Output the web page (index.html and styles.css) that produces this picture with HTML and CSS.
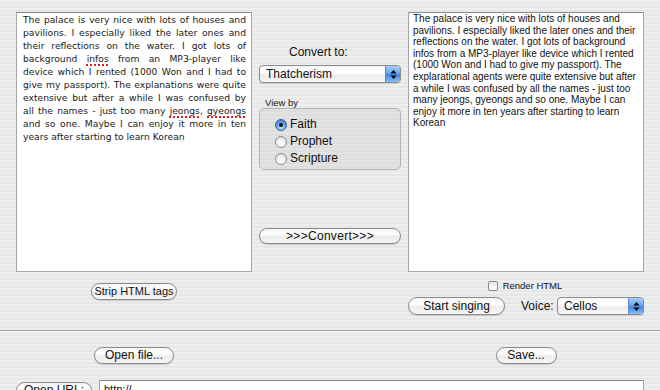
FILE: index.html
```html
<!DOCTYPE html>
<html>
<head>
<meta charset="utf-8">
<link rel="stylesheet" href="styles.css">
</head>
<body>
<div class="top">
  <div class="col col-left">
    <div class="textbox tb-left">
      <span class="jl">The palace is very nice with lots of houses and</span>
      <span class="jl">pavilions. I especially liked the later ones and</span>
      <span class="jl">their reflections on the water. I got lots of</span>
      <span class="jl">background <span class="sp">infos</span> from an MP3-player like</span>
      <span class="jl">device which I rented (1000 Won and I had to</span>
      <span class="jl">give my passport). The explanations were quite</span>
      <span class="jl">extensive but after a while I was confused by</span>
      <span class="jl">all the names - just too many <span class="sp">jeongs</span>, <span class="sp">gyeongs</span></span>
      <span class="jl">and so one. Maybe I can enjoy it more in ten</span>
      <span class="ll">years after starting to learn Korean</span>
    </div>
    <div class="btn btn-strip">Strip HTML tags</div>
  </div>
  <div class="col col-mid">
    <div class="conv-label">Convert to:</div>
    <div class="popup popup-conv">
      <span class="popup-text">Thatcherism</span>
      <span class="stepper"><svg width="7" height="11" viewBox="0 0 7 11"><path d="M3.5 1 L6.5 4.5 L0.5 4.5 Z M3.5 10 L6.5 6.5 L0.5 6.5 Z" fill="#000"/></svg></span>
    </div>
    <div class="group-label">View by</div>
    <div class="group">
      <div class="radio-row"><span class="radio on"></span><span class="rlabel">Faith</span></div>
      <div class="radio-row"><span class="radio"></span><span class="rlabel">Prophet</span></div>
      <div class="radio-row"><span class="radio"></span><span class="rlabel">Scripture</span></div>
    </div>
    <div class="spacer"></div>
    <div class="btn btn-convert">&gt;&gt;&gt;Convert&gt;&gt;&gt;</div>
  </div>
  <div class="col col-right">
    <div class="textbox tb-right">
      <span class="rl">The palace is very nice with lots of houses and</span>
      <span class="rl">pavilions. I especially liked the later ones and their</span>
      <span class="rl">reflections on the water. I got lots of background</span>
      <span class="rl">infos from a MP3-player like device which I rented</span>
      <span class="rl">(1000 Won and I had to give my passport). The</span>
      <span class="rl">explarational agents were quite extensive but after</span>
      <span class="rl">a while I was confused by all the names - just too</span>
      <span class="rl">many jeongs, gyeongs and so one. Maybe I can</span>
      <span class="rl">enjoy it more in ten years after starting to learn</span>
      <span class="rl">Korean</span>
    </div>
    <div class="check-row"><span class="checkbox"></span><span class="clabel">Render HTML</span></div>
    <div class="sing-row">
      <div class="btn btn-sing">Start singing</div>
      <span class="voice-label">Voice:</span>
      <div class="popup popup-voice">
        <span class="popup-text">Cellos</span>
        <span class="stepper"><svg width="7" height="11" viewBox="0 0 7 11"><path d="M3.5 1 L6.5 4.5 L0.5 4.5 Z M3.5 10 L6.5 6.5 L0.5 6.5 Z" fill="#000"/></svg></span>
      </div>
    </div>
  </div>
</div>
<div class="sep"></div>
<div class="files">
  <div class="fcol"><div class="btn btn-open">Open file...</div></div>
  <div class="fgap"></div>
  <div class="fcol"><div class="btn btn-save">Save...</div></div>
</div>
<div class="url-row">
  <div class="btn btn-url">Open URL:</div>
  <div class="url-field">http://</div>
</div>
</body>
</html>
```

FILE: styles.css
```css
html, body {
  margin: 0;
  padding: 0;
}
body {
  width: 660px;
  height: 390px;
  overflow: hidden;
  font-family: "Liberation Sans", Arial, sans-serif;
  color: #111;
  background: repeating-linear-gradient(to bottom, #eeeeee 0px, #eeeeee 2px, #e7e7e7 2px, #e7e7e7 4px);
}
.top {
  display: flex;
  height: 330px;
  box-sizing: border-box;
  padding: 12px 0 0 16px;
}
.col {
  display: flex;
  flex-direction: column;
}
.col-left {
  width: 236px;
  align-items: center;
}
.col-mid {
  width: 156px;
  box-sizing: border-box;
  padding: 0 7px;
}
.col-right {
  width: 236px;
  align-items: stretch;
}
.textbox {
  box-sizing: border-box;
  width: 236px;
  height: 260px;
  background: #fff;
  border: 1px solid #a5a5a5;
  border-top-color: #8a8a8a;
}
.tb-left {
  padding: 0 5px 0 6px;
  font-family: "DejaVu Sans", sans-serif;
  font-size: 9.2px;
  line-height: 13px;
  color: #1a1a1a;
}
.jl {
  display: block;
  text-align: justify;
  text-align-last: justify;
}
.ll {
  display: block;
}
.sp {
  text-decoration: underline dotted #e02020;
  text-decoration-thickness: 1.5px;
  text-underline-offset: 2px;
}
.tb-right {
  padding: 0 4px 0 4px;
  font-size: 10px;
  line-height: 11.6px;
  color: #111;
}
.rl {
  display: block;
  white-space: nowrap;
}
.btn {
  box-sizing: border-box;
  height: 17px;
  border: 1px solid #8a8a8a;
  border-radius: 9px;
  background: linear-gradient(to bottom, #f4f4f4 0%, #ffffff 35%, #ececec 55%, #f6f6f6 100%);
  box-shadow: 0 1px 1px rgba(0,0,0,0.15);
  font-size: 12px;
  line-height: 15px;
  text-align: center;
  color: #111;
}
.btn-strip {
  margin-top: 11px;
  width: 86px;
  font-size: 11px;
}
.conv-label {
  margin-top: 33px;
  padding-left: 30px;
  font-size: 12px;
  line-height: 14px;
}
.popup {
  box-sizing: border-box;
  height: 18px;
  border: 1px solid #8a8a8a;
  border-radius: 4px;
  background: linear-gradient(to bottom, #f6f6f6 0%, #ffffff 40%, #ececec 60%, #f8f8f8 100%);
  box-shadow: 0 1px 1px rgba(0,0,0,0.12);
  display: flex;
  align-items: center;
  overflow: hidden;
}
.popup-conv {
  margin-top: 6px;
}
.popup-text {
  flex: 1;
  padding-left: 6px;
  font-size: 12px;
  line-height: 16px;
}
.stepper {
  width: 14px;
  height: 16px;
  display: flex;
  align-items: center;
  justify-content: center;
  border-left: 1px solid #5d8dcc;
  background: linear-gradient(to bottom, #a8cdf5 0%, #6aa6ec 45%, #3c86e0 55%, #8cc0f4 100%);
}
.group-label {
  margin-top: 15px;
  padding-left: 6px;
  font-size: 9.5px;
  line-height: 10px;
  color: #222;
}
.group {
  margin-top: 0;
  height: 62px;
  box-sizing: border-box;
  border: 1px solid #b4b4b4;
  border-radius: 5px;
  background: rgba(0,0,0,0.045);
  padding: 9px 0 0 15px;
  display: flex;
  flex-direction: column;
  gap: 4px;
}
.radio-row {
  display: flex;
  align-items: center;
  height: 13px;
  gap: 3px;
}
.radio {
  box-sizing: border-box;
  width: 12px;
  height: 12px;
  border-radius: 50%;
  border: 1px solid #8c8c8c;
  background: radial-gradient(circle at 50% 70%, #ffffff 0%, #f2f2f2 50%, #d0d0d0 100%);
  display: flex;
  align-items: center;
  justify-content: center;
}
.radio.on {
  border-color: #3a5f95;
  background: radial-gradient(circle at 50% 75%, #c4e2ff 0%, #6aa8ee 45%, #2c6fd0 100%);
}
.radio.on::after {
  content: "";
  width: 4px;
  height: 4px;
  border-radius: 50%;
  background: #111;
}
.rlabel {
  font-size: 12px;
  line-height: 13px;
}
.spacer {
  height: 58px;
}
.btn-convert {
  height: 16px;
  line-height: 14px;
  letter-spacing: 0.3px;
}
.check-row {
  margin-top: 8px;
  display: flex;
  justify-content: center;
  align-items: center;
  gap: 5px;
  height: 11px;
  padding-right: 2px;
}
.checkbox {
  box-sizing: border-box;
  width: 10px;
  height: 10px;
  border: 1px solid #8a8a8a;
  border-radius: 2px;
  background: linear-gradient(to bottom, #e8e8e8, #ffffff);
}
.clabel {
  font-size: 9.5px;
  line-height: 11px;
}
.sing-row {
  margin-top: 6px;
  display: flex;
  align-items: center;
}
.btn-sing {
  width: 97px;
  height: 18px;
  line-height: 16px;
}
.voice-label {
  margin-left: 16px;
  font-size: 12px;
  width: 36px;
}
.popup-voice {
  width: 87px;
  height: 18px;
}
.sep {
  height: 0;
  border-top: 1px solid #a3a3a3;
  border-bottom: 1px solid #f8f8f8;
}
.files {
  display: flex;
  padding: 15px 0 0 16px;
}
.fcol {
  width: 236px;
  display: flex;
  justify-content: center;
}
.fgap {
  width: 156px;
}
.btn-open {
  width: 80px;
}
.btn-save {
  width: 61px;
}
.url-row {
  display: flex;
  align-items: flex-start;
  padding: 16px 0 0 16px;
  gap: 7px;
}
.btn-url {
  margin-top: 2px;
  width: 76px;
}
.url-field {
  box-sizing: border-box;
  width: 545px;
  height: 20px;
  background: #fff;
  border: 1px solid #a5a5a5;
  border-top-color: #8a8a8a;
  font-size: 11px;
  padding: 2px 4px;
}
```
